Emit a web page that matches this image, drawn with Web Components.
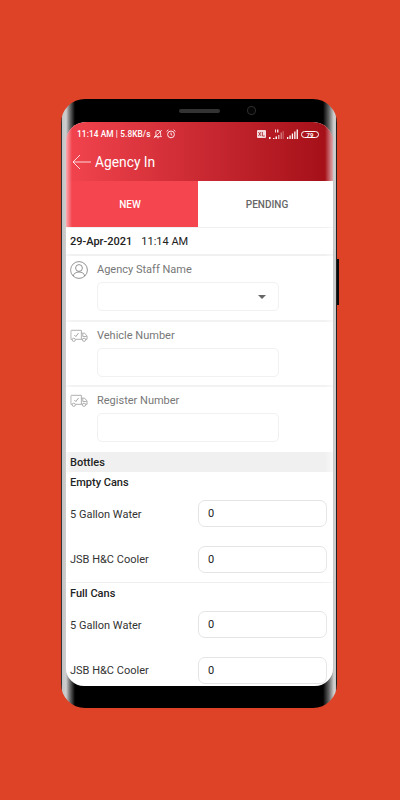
<!DOCTYPE html>
<html>
<head>
<meta charset="utf-8">
<title>Agency In</title>
<style>
    html, body { margin: 0; height: 800px; overflow: hidden; background: #de4327; font-family: Roboto, "Liberation Sans", sans-serif; }
    body { display: flex; justify-content: center; align-items: flex-start; padding: 99px 2px 0 0; box-sizing: border-box; }
</style>
</head>
<body>
<template id="truck-icon">
    <svg width="19" height="14" viewBox="0 0 19 14" fill="none" stroke="#969696" stroke-width=".8">
        <path d="M2 10.5H1V1.6Q1 1 1.6 1H12V10.5H6"/>
        <path d="M12 4H15.5L18 7V10.5H16.5M12 10.5H13"/>
        <path d="M13.5 4.5V7.5H17.6"/>
        <path d="M4.6 6L6.2 7.6L9 3.8" stroke-width=".9"/>
        <circle cx="4" cy="11" r="1.7"/>
        <circle cx="14.8" cy="11" r="1.7"/>
    </svg>
</template>

<uc-phone>
    <uc-status-bar></uc-status-bar>
    <uc-app-bar>Agency In</uc-app-bar>
    <uc-tabs></uc-tabs>
    <uc-date-row day="29-Apr-2021" time="11:14 AM"></uc-date-row>
    <uc-form-row label="Agency Staff Name" icon="person" select></uc-form-row>
    <uc-form-row label="Vehicle Number" icon="truck"></uc-form-row>
    <uc-form-row label="Register Number" icon="truck" last></uc-form-row>
    <uc-band>Bottles</uc-band>
    <uc-can-group title="Empty Cans">
        <uc-qty-row label="5 Gallon Water" value="0"></uc-qty-row>
        <uc-qty-row label="JSB H&amp;C Cooler" value="0"></uc-qty-row>
    </uc-can-group>
    <uc-can-group title="Full Cans">
        <uc-qty-row label="5 Gallon Water" value="0"></uc-qty-row>
        <uc-qty-row label="JSB H&amp;C Cooler" value="0"></uc-qty-row>
    </uc-can-group>
</uc-phone>

<script>
class Phone extends HTMLElement {
    constructor() {
        super();
        this.attachShadow({mode: 'open'});
        this.shadowRoot.innerHTML = `
        <style>
            :host {
                display: block;
                position: relative;
                width: 276px;
                height: 609px;
                box-sizing: border-box;
                padding: 23px 4px 22px 5px;
                border-radius: 24px;
                background: linear-gradient(90deg, #1a1a1a 0, #3a3a3a .6px, #c4c4c4 1.5px, #cfcfcf 5px, #6a6a6a 9px, #000 14px, #000 calc(100% - 14px), #666 calc(100% - 8px), #d2d2d2 calc(100% - 3px), #c8c8c8 calc(100% - 1.4px), #222 calc(100% - .5px), #111 100%);
            }
            .speaker {
                position: absolute;
                left: 118px;
                top: 10px;
                width: 41px;
                height: 4px;
                border-radius: 2px;
                background: #333;
            }
            .camera {
                position: absolute;
                left: 186px;
                top: 7px;
                width: 9px;
                height: 9px;
                box-sizing: border-box;
                border: 1px solid #2c2c2c;
                border-radius: 4px;
                background: #060606;
            }
            .button {
                position: absolute;
                left: 100%;
                top: 160px;
                width: 2px;
                height: 46px;
                background: #0a0a0a;
            }
            .screen {
                position: relative;
                height: 100%;
                overflow: hidden;
                background: #fff;
                border-radius: 20px 20px 18px 18px;
            }
            .screen::after {
                content: '';
                position: absolute;
                inset: 0 0 0 0;
                pointer-events: none;
                background:
                    linear-gradient(90deg, rgba(255,255,255,.55), rgba(255,255,255,0)) left/6px 100% no-repeat,
                    linear-gradient(270deg, rgba(255,255,255,.65), rgba(255,255,255,0)) right/8px 100% no-repeat;
            }
        </style>
        <div class="speaker"></div>
        <div class="camera"></div>
        <div class="button"></div>
        <div class="screen"><slot></slot></div>`;
    }
}

class StatusBar extends HTMLElement {
    constructor() {
        super();
        this.attachShadow({mode: 'open'});
        this.shadowRoot.innerHTML = `
        <style>
            :host {
                display: flex;
                align-items: center;
                height: 24px;
                padding: 0 14px 0 11px;
                color: #fff;
                font-size: 8.3px;
                font-weight: 500;
                letter-spacing: .1px;
                white-space: nowrap;
            }
            .left, .right { display: flex; align-items: center; }
            .left { gap: 2px; }
            .right { margin-left: auto; gap: 3px; }
            svg { display: block; }
            .battery {
                width: 18px;
                height: 7px;
                box-sizing: border-box;
                border: 1px solid #fff;
                border-radius: 4px;
                font-size: 6px;
                font-weight: 700;
                line-height: 5px;
                text-align: center;
            }
        </style>
        <div class="left">
            <span>11:14 AM | 5.8KB/s</span>
            <svg width="10" height="10" viewBox="0 0 10 10" fill="none" stroke="#fff" stroke-width=".8">
                <path d="M1.5 7.6H8.5L7.6 6.4V4Q7.6 1.4 5 1.4Q3.6 1.4 2.9 2.4V6.2Z"/>
                <path d="M4.2 8.8H5.8M1 9.2L8.8 1"/>
            </svg>
            <svg style="margin-left:1px" width="10" height="10" viewBox="0 0 10 10" fill="none" stroke="#fff" stroke-width=".9">
                <circle cx="5" cy="5.4" r="3.4"/>
                <path d="M5 3.6V5.6L6.2 6.2M.6 2.4L2.4 .8M9.4 2.4L7.6 .8"/>
            </svg>
        </div>
        <div class="right">
            <svg width="9" height="8" viewBox="0 0 9 8">
                <rect width="9" height="8" rx="1" fill="#f4dcdc"/>
                <path d="M1.5 2L4 6M4 2L1.5 6M5.4 2V6H7.8" stroke="#a82028" stroke-width=".8" fill="none"/>
            </svg>
            <svg width="15" height="10" viewBox="0 0 15 10" fill="#fff">
                <path d="M4 9h1.5v1H4zM6.5 7.6H8V10H6.5z" />
                <path d="M9 6h1.5v4H9z" opacity=".6"/>
                <path d="M11.5 3.5H13V10h-1.5z" opacity=".4"/>
                <path d="M13.6 2h1.2v8h-1.2z" opacity=".3"/>
                <path d="M0 8h1.5v2H0z"/>
                <path d="M6 .5h1v3H6zM8 .5h1.4v3H8z" opacity=".85"/>
            </svg>
            <svg width="11" height="10" viewBox="0 0 11 10" fill="#fff">
                <path d="M0 8h1.3v2H0zM2.4 6.4h1.3V10H2.4zM4.8 4.6h1.3V10H4.8zM7.2 2.6h1.3V10H7.2zM9.6 .6h1.3V10H9.6z"/>
            </svg>
            <div class="battery">79</div>
        </div>`;
    }
}

class AppBar extends HTMLElement {
    constructor() {
        super();
        this.attachShadow({mode: 'open'});
        this.shadowRoot.innerHTML = `
        <style>
            :host {
                display: flex;
                align-items: center;
                gap: 4px;
                height: 35px;
                padding: 0 0 3px 6px;
                box-sizing: border-box;
                color: #fff;
                font-size: 13.8px;
            }
            svg { display: block; }
        </style>
        <svg width="19" height="16" viewBox="0 0 19 16" fill="none" stroke="#fff" stroke-width=".8">
            <path d="M19 8H1M8 1L1 8L8 15"/>
        </svg>
        <slot></slot>`;
    }
}

class Tabs extends HTMLElement {
    constructor() {
        super();
        this.attachShadow({mode: 'open'});
        this.shadowRoot.innerHTML = `
        <style>
            :host {
                display: grid;
                grid-template-columns: 132px 1fr;
                height: 46px;
                border-bottom: 1px solid #efefef;
                background: #fff;
                font-size: 10px;
                font-weight: 500;
            }
            div { display: flex; align-items: center; justify-content: center; }
            .on { background: #f5454f; color: #fff; padding-right: 4px; }
            .off { color: #666; padding-left: 3px; }
        </style>
        <div class="on">NEW</div>
        <div class="off">PENDING</div>`;
    }
}

class DateRow extends HTMLElement {
    constructor() {
        super();
        this.attachShadow({mode: 'open'});
        this.shadowRoot.innerHTML = `
        <style>
            :host {
                display: flex;
                align-items: center;
                gap: 9px;
                height: 28px;
                padding: 1px 4px 0;
                box-sizing: border-box;
                border-bottom: 2px solid #f0f0f0;
                color: #222;
                font-size: 11px;
            }
            b { font-weight: 500; }
        </style>
        <b></b><span></span>`;
        this.shadowRoot.querySelector('b').textContent = this.getAttribute('day');
        this.shadowRoot.querySelector('span').textContent = this.getAttribute('time');
    }
}

class FormRow extends HTMLElement {
    constructor() {
        super();
        this.attachShadow({mode: 'open'});
        const person = `
            <svg width="18" height="18" viewBox="0 0 18 18" fill="none" stroke="#777" stroke-width=".8">
                <circle cx="9" cy="9" r="8.4"/>
                <circle cx="9" cy="7" r="3.4"/>
                <path d="M3.2 15C3.8 12.4 6 11 9 11S14.2 12.4 14.8 15"/>
            </svg>`;
        const truck = document.getElementById('truck-icon').innerHTML;
        const caret = this.hasAttribute('select') ? '<i></i>' : '';
        this.shadowRoot.innerHTML = `
        <style>
            :host {
                display: grid;
                grid-template-columns: 18px 182px;
                column-gap: 9px;
                height: 65.5px;
                padding: 5px 0 0 4px;
                box-sizing: border-box;
                border-bottom: 2px solid #f2f2f2;
                align-content: start;
            }
            :host([last]) { border-bottom: 0; height: 65px; }
            .icon { height: 18px; display: flex; align-items: center; }
            label { color: #777; font-size: 11px; line-height: 18px; height: 18px; }
            .box {
                grid-column: 2;
                display: flex;
                align-items: center;
                justify-content: flex-end;
                height: 29px;
                margin-top: 3px;
                padding-right: 12px;
                box-sizing: border-box;
                border: 1px solid #f1f1f1;
                border-radius: 5px;
            }
            i {
                width: 0;
                height: 0;
                border: 4px solid transparent;
                border-top: 4px solid #666;
                border-bottom: 0;
            }
            svg { display: block; }
        </style>
        <div class="icon">${this.getAttribute('icon') === 'person' ? person : truck}</div>
        <label></label>
        <div class="box">${caret}</div>`;
        this.shadowRoot.querySelector('label').textContent = this.getAttribute('label');
    }
}

class Band extends HTMLElement {
    constructor() {
        super();
        this.attachShadow({mode: 'open'});
        this.shadowRoot.innerHTML = `
        <style>
            :host {
                display: flex;
                align-items: center;
                height: 20px;
                padding-left: 4px;
                background: #f0f0f0;
                color: #222;
                font-size: 11px;
                font-weight: 500;
            }
        </style>
        <slot></slot>`;
    }
}

class CanGroup extends HTMLElement {
    constructor() {
        super();
        this.attachShadow({mode: 'open'});
        this.shadowRoot.innerHTML = `
        <style>
            :host {
                display: block;
                height: 111px;
                box-sizing: border-box;
                padding: 0 6px 0 4px;
                border-bottom: 1px solid #efefef;
            }
            h3 {
                margin: 0 0 7px;
                padding-top: 1px;
                height: 20px;
                line-height: 20px;
                color: #222;
                font-size: 11px;
                font-weight: 500;
            }
            .rows { display: flex; flex-direction: column; gap: 18.5px; }
        </style>
        <h3></h3>
        <div class="rows"><slot></slot></div>`;
        this.shadowRoot.querySelector('h3').textContent = this.getAttribute('title');
    }
}

class QtyRow extends HTMLElement {
    constructor() {
        super();
        this.attachShadow({mode: 'open'});
        this.shadowRoot.innerHTML = `
        <style>
            :host {
                display: grid;
                grid-template-columns: 128px 129px;
                align-items: center;
                height: 27px;
                color: #333;
                font-size: 11px;
            }
            span { padding-top: 1px; }
            .box {
                display: flex;
                align-items: center;
                height: 27px;
                padding-left: 9px;
                box-sizing: border-box;
                border: 1px solid #e4e4e4;
                border-radius: 7px;
                font-size: 11px;
                color: #222;
            }
        </style>
        <span></span>
        <div class="box"></div>`;
        this.shadowRoot.querySelector('span').textContent = this.getAttribute('label');
        this.shadowRoot.querySelector('.box').textContent = this.getAttribute('value');
    }
}

customElements.define('uc-phone', Phone);
customElements.define('uc-status-bar', StatusBar);
customElements.define('uc-app-bar', AppBar);
customElements.define('uc-tabs', Tabs);
customElements.define('uc-date-row', DateRow);
customElements.define('uc-form-row', FormRow);
customElements.define('uc-band', Band);
customElements.define('uc-can-group', CanGroup);
customElements.define('uc-qty-row', QtyRow);
</script>
<style>
    uc-status-bar { background: linear-gradient(90deg, #f2444e 0, #a30f17 100%); }
    uc-app-bar { background: linear-gradient(90deg, #f2444e 0, #a30f17 100%); }
</style>
</body>
</html>
